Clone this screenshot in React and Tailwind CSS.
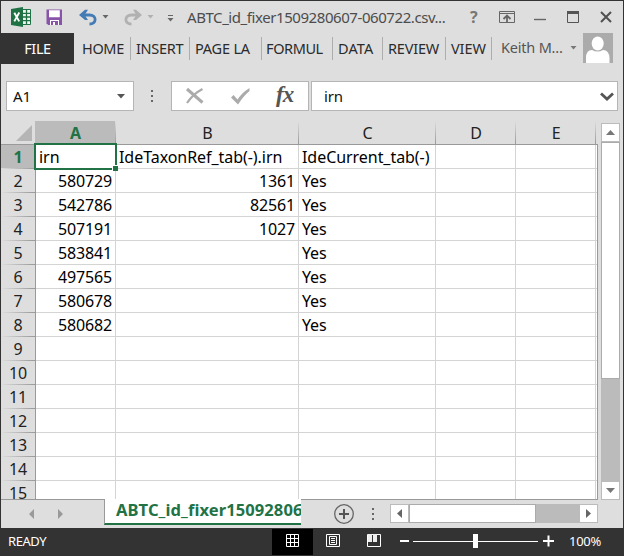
import React from 'react';

const tabs = [
  { label: 'HOME', cell: 'w-[57px] pl-[8px]', text: 'tracking-[-0.35px]' },
  { label: 'INSERT', cell: 'w-[59px] pl-[5px]', text: 'tracking-[-0.3px]' },
  { label: 'PAGE LA', cell: 'w-[72px] pl-[5px]', text: 'tracking-[-0.2px]' },
  { label: 'FORMUL', cell: 'w-[71px] pl-[4px]', text: 'tracking-[-0.4px]' },
  { label: 'DATA', cell: 'w-[50px] pl-[5px]', text: 'tracking-[0.1px]' },
  { label: 'REVIEW', cell: 'w-[63px] pl-[5px]', text: 'tracking-[-0.2px]' },
  { label: 'VIEW', cell: 'w-[46px] pl-[5px]', text: 'tracking-[-0.1px]' },
];

const data = [
  ['irn', 'IdeTaxonRef_tab(-).irn', 'IdeCurrent_tab(-)'],
  ['580729', '1361', 'Yes'],
  ['542786', '82561', 'Yes'],
  ['507191', '1027', 'Yes'],
  ['583841', '', 'Yes'],
  ['497565', '', 'Yes'],
  ['580678', '', 'Yes'],
  ['580682', '', 'Yes'],
];

const cols = [
  { name: 'A', w: 'w-[80px]' },
  { name: 'B', w: 'w-[183px]' },
  { name: 'C', w: 'w-[137px]' },
  { name: 'D', w: 'w-[80px]' },
  { name: 'E', w: 'w-[80px]' },
];

function TitleBar() {
  return (
    <div className="flex h-[32px] shrink-0 items-center">
      <svg className="ml-[10px] shrink-0" width="21" height="20" viewBox="0 0 21 20">
        <path d="M10 2.5h9.5v15H10z" fill="#f4f4f4" stroke="#1f7244" />
        <path d="M11 6.3h8.5M11 10h8.5M11 13.7h8.5M15.5 3v14" stroke="#1f7244" strokeWidth="1.3" />
        <path d="M0 2 12 0v20L0 18z" fill="#1f7244" />
        <path d="m3.3 5.7 4.9 8.7M8.3 5.5l-5 8.9" stroke="#fff" strokeWidth="1.9" />
      </svg>
      <svg className="ml-[14px] shrink-0" width="17" height="17" viewBox="0 0 17 17">
        <path d="M.5.5H16V16H2.2L.5 14.3z" fill="#8853a9" />
        <path d="M3 1.3h10.8v7H3zM4 11h9v5H4z" fill="#fff" />
        <path d="M5 12h7v4H9v-3H7v3H5z" fill="#8853a9" />
      </svg>
      <svg className="ml-[16px] shrink-0" width="19" height="17" viewBox="0 0 19 17">
        <path d="M2 6h8.5c7.5 0 7.5 9 0 9" fill="none" stroke="#437bb5" strokeWidth="2.8" />
        <path d="M0 6 6 .8h3L5.6 6 9 11H6z" fill="#437bb5" />
      </svg>
      <svg className="ml-[4px] shrink-0" width="7" height="4" viewBox="0 0 7 4"><path d="M.5 0h6l-3 3.5z" fill="#666" /></svg>
      <svg className="ml-[14px] shrink-0" width="19" height="17" viewBox="0 0 19 17">
        <path d="M17 6H8.500C1 6 1 15 8.500 15" fill="none" stroke="#b1b1b1" strokeWidth="2.8" />
        <path d="m19 6-6-5.200h-3L13.400 6 10 11h3z" fill="#b1b1b1" />
      </svg>
      <svg className="ml-[5px] shrink-0" width="7" height="4" viewBox="0 0 7 4"><path d="M.5 0h6l-3 3.500z" fill="#b0b0b0" /></svg>
      <svg className="mt-[2px] ml-[13px] shrink-0" width="7" height="7" viewBox="0 0 7 7"><path d="M1 0h5v1H1zM.5 3h6l-3 3.500z" fill="#666" /></svg>
      <div className="ml-[13px] w-[271px] shrink-0 whitespace-nowrap text-[15px] leading-[20px] tracking-[-0.43px] text-[#4c4c4c]">ABTC_id_fixer1509280607-060722.csv...</div>
      <div className="w-[27px] shrink-0 pl-[12px] text-[16px] leading-[20px] font-bold text-[#777]">?</div>
      <svg className="shrink-0" width="132" height="20" viewBox="485 7 132 20" fill="none">
        <path d="M499.500 11.500h15v11h-15zM499.500 13.500h15" stroke="#666" />
        <path d="M507 22v-6m-3.500 3 3.500-3.500 3.500 3.500" stroke="#666" strokeWidth="1.800" />
        <path d="M534 19.500h12" stroke="#666" strokeWidth="1.400" />
        <path d="M567.500 11.500h11v11h-11z" stroke="#555" />
        <path d="M567 12.500h12" stroke="#555" strokeWidth="3" />
        <path d="m601 12 10 10m0-10-10 10" stroke="#505050" strokeWidth="2" />
      </svg>
    </div>
  );
}

function Ribbon() {
  return (
    <div className="flex h-[31px] shrink-0 text-[14.5px]">
      <div className="flex w-[73px] shrink-0 items-center justify-center bg-[#333] text-white tracking-[-0.4px]">FILE</div>
      <div className="flex pt-[4px]">
        {tabs.map((t) => (
          <div key={t.label} className={`h-[23px] shrink-0 border-r border-[#adadad] leading-[23px] whitespace-nowrap text-[#2b2b2b] ${t.cell} ${t.text}`}>{t.label}</div>
        ))}
      </div>
      <div className="w-[78px] shrink-0 pl-[9px] leading-[29px] whitespace-nowrap text-[#555] tracking-[-0.2px]">Keith M...</div>
      <svg className="mt-[13px] shrink-0" width="7" height="4" viewBox="0 0 7 4"><path d="M.5 0h6l-3 3.500z" fill="#777" /></svg>
      <svg className="ml-[6px] shrink-0" width="30" height="30" viewBox="0 0 30 30">
        <path d="M0 0h30v30H0z" fill="#ababab" />
        <ellipse cx="14.700" cy="10.500" rx="6" ry="7" fill="#fff" />
        <path d="M3 30v-5q0-8 6-8 5.500 3 11 0 6 0 6.500 8v5z" fill="#fff" />
      </svg>
    </div>
  );
}

function FormulaBar() {
  return (
    <div className="mt-[17px] flex h-[30px] shrink-0 text-[15px] text-[#111]">
      <div className="ml-[5px] flex w-[128px] shrink-0 items-center justify-between border border-[#b5b5b5] bg-white pr-[8px] pl-[6px]">
        A1
        <svg width="8" height="5" viewBox="0 0 8 5"><path d="M0 0h8L4 4.500z" fill="#555" /></svg>
      </div>
      <svg className="mt-[9px] ml-[17px] shrink-0" width="2" height="12"><path d="M0 0h2v2H0zM0 5h2v2H0zM0 10h2v2H0z" fill="#666" /></svg>
      <div className="ml-[18px] flex w-[138px] shrink-0 border border-[#b5b5b5] bg-white">
        <svg width="136" height="28" viewBox="172 82 136 28" fill="none">
          <path d="m187 89 15.500 13.500" stroke="#ababab" strokeWidth="3" />
          <path d="M202.500 89Q193 94 187 103" stroke="#ababab" strokeWidth="2.200" />
          <path d="M231 97.500 233.500 95l4 4.500q4-6.500 12-11.500v3q-6 5-11.500 13.500z" fill="#ababab" />
          <text x="276" y="102" fontFamily="Liberation Serif, serif" fontStyle="italic" fontWeight="bold" fontSize="23" letterSpacing="-1" fill="#555">fx</text>
        </svg>
      </div>
      <div className="ml-[2px] flex w-[307px] shrink-0 items-center justify-between border border-[#b5b5b5] bg-white pr-[3px] pl-[12px] tracking-[-0.2px]">
        irn
        <svg width="14" height="10" viewBox="0 0 14 10"><path d="m1 2.500 6 5.500 6-5.500" fill="none" stroke="#555" strokeWidth="2.800" /></svg>
      </div>
    </div>
  );
}

function Sheet() {
  return (
    <div className="relative h-[378px] w-[597px] shrink-0 overflow-hidden text-[16px] tracking-[-0.15px] text-black">
      <div className="flex h-[24px] border-b border-[#999]">
        <div className="flex w-[34px] shrink-0 items-end justify-end pr-[3px] pb-[3px]">
          <svg width="16" height="16"><path d="M16 0v16H0z" fill="#b5b5b5" /></svg>
        </div>
        {cols.map((c, i) => (
          <div key={c.name} className={`relative flex shrink-0 items-center justify-center text-[#222] ${i === 0 ? 'w-[81px] bg-[#bbb] font-bold text-[#217346]' : c.w}`}>
            {c.name}
            <div className="absolute right-0 bottom-0 h-[23px] w-px bg-linear-to-b from-[#ddd] to-[#999]" />
          </div>
        ))}
      </div>
      {Array.from({ length: 15 }, (_, r) => (
        <div key={r} className="flex h-[24px]">
          <div className={`relative w-[35px] shrink-0 border-r border-[#999] text-center leading-[25px] ${r === 0 ? 'bg-[#bbb] font-bold text-[#217346]' : 'text-[#222]'}`}>
            {r + 1}
            <div className="absolute bottom-0 left-0 h-px w-full bg-linear-to-r from-[#ddd] to-[#999]" />
          </div>
          <div className="flex w-[562px] shrink-0 border-r border-[#999] bg-white">
            {cols.map((c, i) => {
              const value = data[r]?.[i] ?? '';
              const numeric = /^\d+$/.test(value);
              return (
                <div key={c.name} className={`shrink-0 overflow-hidden border-r border-b border-[#d4d4d4] px-[3px] leading-[25px] whitespace-nowrap ${c.w} ${numeric ? 'text-right' : ''} ${r === 0 ? 'tracking-[-0.05px]' : ''}`}>{value}</div>
              );
            })}
            <div className="flex-1 border-b border-[#d4d4d4]" />
          </div>
        </div>
      ))}
      <div className="absolute top-[22px] left-[33px] h-[27px] w-[83px] border-2 border-[#217346]" />
      <div className="absolute top-[44px] left-[111px] h-[6px] w-[6px] border-t border-l border-white bg-[#217346]" />
    </div>
  );
}

function VerticalScroll() {
  return (
    <div className="mt-[2px] ml-[3px] flex h-[377px] w-[19px] shrink-0 flex-col bg-[#bbb]">
      <div className="flex h-[19px] items-center justify-center border border-[#bbb] bg-white">
        <svg width="9" height="5"><path d="M0 5h9L4.500 0z" fill="#777" /></svg>
      </div>
      <div className="h-[237px] border border-[#ababab] bg-white" />
      <div className="flex-1" />
      <div className="flex h-[19px] items-center justify-center border border-[#bbb] bg-white">
        <svg width="9" height="5"><path d="M0 0h9L4.500 5z" fill="#777" /></svg>
      </div>
    </div>
  );
}

function SheetTabs() {
  return (
    <div className="flex h-[29px] shrink-0">
      <div className="flex w-[103px] shrink-0 items-center border-t border-[#999] pl-[28px]">
        <svg width="34" height="10"><path d="M5 0v10L0 5zM29 0v10l5-5z" fill="#999" /></svg>
      </div>
      <div className="h-[26px] w-[197px] shrink-0 overflow-hidden border-b-2 border-l border-b-[#217346] border-l-[#999] bg-white pl-[11px] text-[16.5px] leading-[22px] font-bold whitespace-nowrap tracking-[0.1px] text-[#217346]">ABTC_id_fixer1509280607</div>
      <div className="flex w-[297px] shrink-0 border-t border-[#999]">
        <svg className="mt-[4px] ml-[32px] shrink-0" width="46" height="21" fill="none">
          <circle cx="11" cy="10" r="9.300" stroke="#666" strokeWidth="1.300" />
          <path d="M6 10h10M11 5v10" stroke="#555" strokeWidth="2" />
          <path d="M39 4h2v2h-2zM39 9h2v2h-2zM39 14h2v2h-2z" fill="#666" />
        </svg>
        <div className="mt-[4px] ml-[11px] flex h-[19px] w-[208px] shrink-0 bg-[#bbb]">
          <div className="flex w-[19px] items-center justify-center border border-[#bbb] bg-white"><svg width="5" height="9"><path d="M5 0v9L0 4.500z" fill="#666" /></svg></div>
          <div className="w-[127px] border border-[#ababab] bg-white" />
          <div className="flex-1" />
          <div className="flex w-[19px] items-center justify-center border border-[#bbb] bg-white"><svg width="5" height="9"><path d="M0 0v9l5-4.500z" fill="#666" /></svg></div>
        </div>
      </div>
    </div>
  );
}

function StatusBar() {
  return (
    <div className="flex h-[28px] shrink-0 items-start bg-[#333] text-[13px] leading-[27px] tracking-[-0.45px] text-white">
      <div className="w-[271px] shrink-0 pl-[7px]">READY</div>
      <div className="mt-px flex h-[26px] w-[41px] shrink-0 justify-center bg-black pt-[5px]">
        <svg width="13" height="13"><path d="M.5.5h12v12H.5zM4.500.5v12M8.500.5v12M.5 4.500h12M.5 8.500h12" fill="none" stroke="#fff" /></svg>
      </div>
      <svg className="shrink-0" width="242" height="28" viewBox="313 528 242 28" fill="none" stroke="#fff">
        <path d="M326.500 534.500h13v12h-13z" />
        <path d="M329.500 536.500h7v8h-7zM331 538.500h4M331 540.500h4M331 542.500h4" />
        <path d="M367.500 534.500h13v12h-13z" />
        <path d="M368 534h4v8h-4zM373 534h4v8h-4z" fill="#eee" stroke="none" />
        <path d="M400 541h9M543 541h11M548.500 535.500v11" strokeWidth="2" />
        <path d="M413 541.500h125" />
        <path d="M473 534h5v14h-5z" fill="#fff" stroke="none" />
      </svg>
      <div className="pl-[14px] tracking-[-0.3px]">100%</div>
    </div>
  );
}

export default function App() {
  return (
    <div className="flex h-[556px] w-[624px] flex-col overflow-hidden border-x border-t border-[#333] bg-[#dedede] font-['Noto_Sans','Open_Sans',sans-serif]">
      <TitleBar />
      <Ribbon />
      <FormulaBar />
      <div className="mt-[10px] flex h-[378px] shrink-0">
        <Sheet />
        <VerticalScroll />
      </div>
      <SheetTabs />
      <StatusBar />
    </div>
  );
}
